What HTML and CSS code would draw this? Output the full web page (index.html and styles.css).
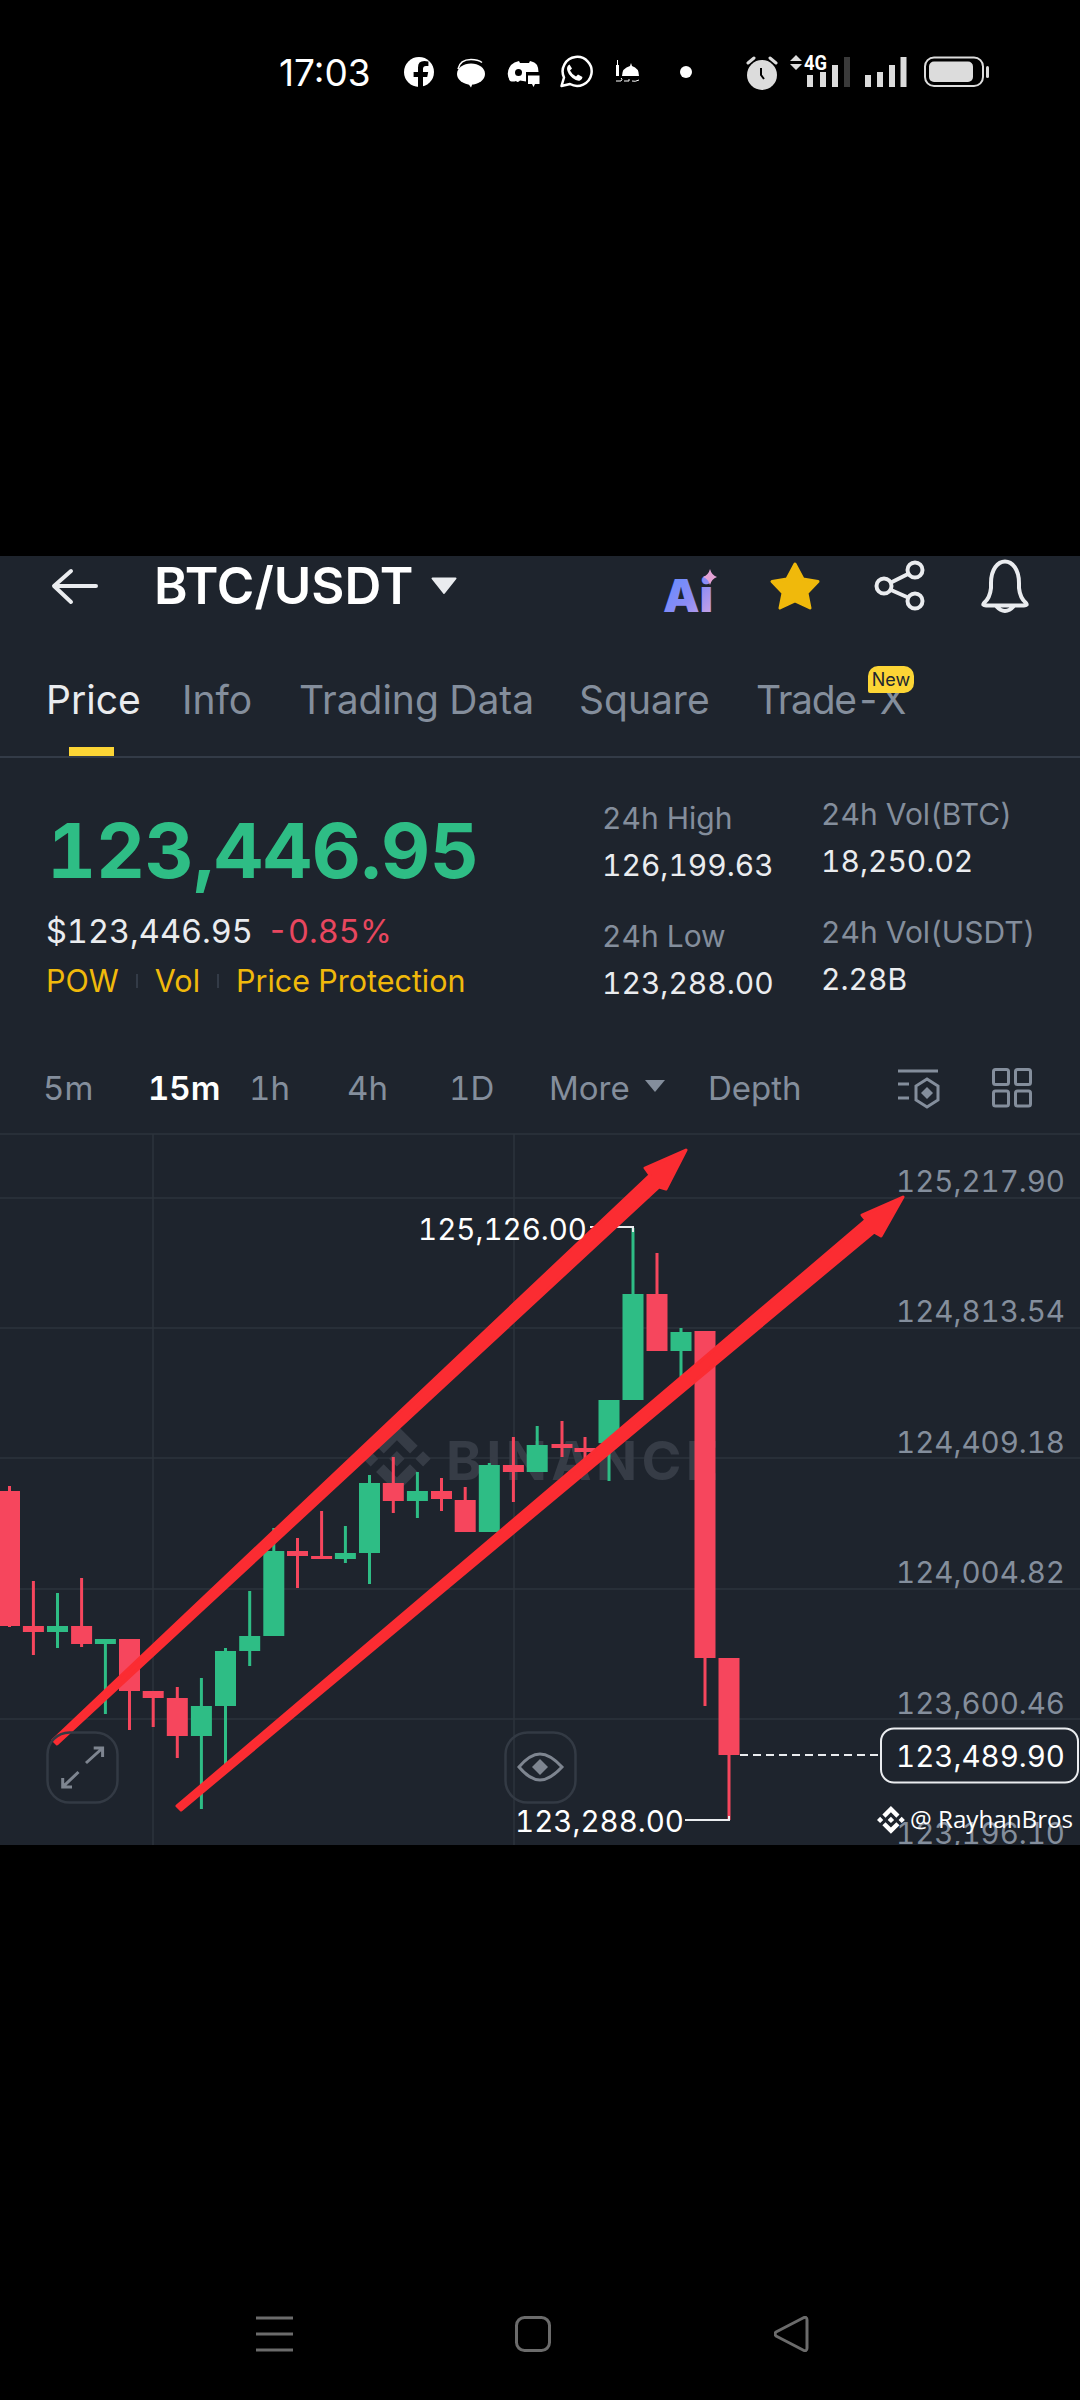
FILE: index.html
```html
<!DOCTYPE html>
<html lang="en">
<head>
<meta charset="utf-8">
<title>BTC/USDT</title>
<link rel="stylesheet" href="styles.css">
</head>
<body>
<div class="phone">
  <div class="status">
    <div class="time">17:03</div>
    <svg class="si" width="50" height="36" viewBox="400 55 50 36"><circle class="w" cx="419" cy="72" r="15"/><path class="k" d="M423 87.5V77h4.2l1-5H423v-3q0-3 3-3h2.4v-4.6q-2-.4-4-.4q-6.4 0-6.4 6.4V72h-4.4v5H418v10.5z"/></svg>
    <svg class="si" width="55" height="36" viewBox="450 55 55 36"><path class="ol" d="M458 69Q460 59.500 471 59.500Q478 59.500 482 62.500"/><ellipse class="w" cx="471" cy="74" rx="14" ry="10.500"/><path class="w" d="M467 82l4 5.500l2-5z"/></svg>
    <svg class="si" width="45" height="36" viewBox="505 55 45 36"><path class="w" d="M510 81Q505 73 511 65Q514 62 519 61L520 63H529L530 61Q535 62 537 65Q538.500 68 538.500 72H526V81.500L520 80.500Q518 83 516 81Q513 82 510 81Z"/><circle class="k" cx="518.500" cy="72.500" r="3.500"/><path class="w" d="M528 75.500H539.500V84H535L533.500 87L532 84H528Z"/></svg>
    <svg class="si" width="60" height="36" viewBox="550 55 60 36"><path class="wa" d="M561.500 86l2.500-8.500A14.500 14.500 0 1 1 570 84z"/><path class="w" d="M569.500 64.500q-2.500 1-2.500 4.500q.5 4.500 5.500 9q4.500 3.500 7.500 2.500q2.500-1 2.500-3.500l-4.500-2.500l-2 2q-4-2-6-6l2-2z"/></svg>
    <svg class="si" width="60" height="36" viewBox="610 55 60 36"><path class="w" d="M616 65h3v11h-3zM617 60h1v5h-1zM622 76q0-8 8-10l1-3l1 3q7 2 7 10z"/><path class="ol2" d="M616 81h5q2-2 0-3M624 81h5v-2M632 81q3 1 7-1"/></svg>
    <svg class="si" width="70" height="36" viewBox="670 55 70 36"><circle class="w" cx="686" cy="72" r="6"/></svg>
    <svg class="si" width="45" height="36" viewBox="740 55 45 36"><circle class="g" cx="762" cy="75" r="15"/><path class="ear" d="M748 63l6-5M776 63l-6-5"/><path class="hand" d="M761 68v7l3 4"/></svg>
    <svg class="si" width="75" height="36" viewBox="785 55 75 36"><path class="g" d="M796 55l6 6h-12zM796 70l6-6h-12z"/><text class="fourg" x="804" y="70" textLength="23" lengthAdjust="spacingAndGlyphs">4G</text><rect class="g" x="807" y="75" width="6" height="12"/><rect class="g" x="820" y="72" width="6" height="15"/><rect class="g" x="832" y="65" width="6" height="22"/><rect class="dim" x="844" y="57" width="6" height="30"/></svg>
    <svg class="si" width="60" height="36" viewBox="860 55 60 36"><rect class="g" x="865" y="75" width="6" height="12"/><rect class="g" x="877" y="72" width="6" height="15"/><rect class="g" x="889" y="65" width="6" height="22"/><rect class="g" x="900.500" y="57" width="6" height="30"/></svg>
    <svg class="si" width="70" height="36" viewBox="920 55 70 36"><rect class="bat" x="925" y="57.500" width="58" height="28.500" rx="9"/><rect class="g" x="929" y="61.500" width="44" height="20.500" rx="5"/><rect class="g" x="986" y="66" width="3" height="12" rx="1.500"/></svg>
  </div>

  <main class="app">
    <header class="head">
      <svg class="back" width="48" height="40" viewBox="50 567 48 40"><path class="hline" d="M96 587H55M71 572L54 587L71 603"/></svg>
      <h1 class="title">BTC/USDT</h1>
      <svg class="caret" width="28" height="18" viewBox="429 580 28 18"><path class="caretfill" d="M431.500 581.500H454.500L443 596z"/></svg>
      <svg class="headicons" width="370" height="56" viewBox="660 560 370 56">
        <defs><linearGradient id="aigrad" x1="0" y1="0" x2="1" y2="1"><stop offset="0" stop-color="#5a8cff"/><stop offset=".55" stop-color="#8b8cf5"/><stop offset="1" stop-color="#d9a8e0"/></linearGradient></defs>
        <text class="ai" x="663" y="614" fill="url(#aigrad)">Ai</text>
        <path class="spark" d="M710 571q1.500 6 7 8q-5.500 2-7 8q-1.500-6-7-8q5.500-2 7-8z"/>
        <path class="star" d="M795 566L803 581L818 583.500L807 595L810 610L795 603L780 610L783 595L772 583.500L787 581z"/>
        <g class="ico"><circle cx="915" cy="572" r="7.500"/><circle cx="884" cy="588" r="7.500"/><circle cx="915" cy="603" r="7.500"/><path d="M908 576L891 584.500M891 592L908 599.500"/>
        <path d="M984 605Q990 600 991 590V585C991 571 998 563.500 1005 563.500C1012 563.500 1019 571 1019 585V590Q1020 600 1026 605Q1028 607.500 1024 607.500H986Q982 607.500 984 605ZM996 608Q1005 618 1014 608"/></g>
      </svg>
    </header>

    <nav class="tabs">
      <div class="tab on">Price<span class="bar"></span></div>
      <div class="tab">Info</div>
      <div class="tab">Trading Data</div>
      <div class="tab">Square</div>
      <div class="tab tx">Trade-X<span class="new">New</span></div>
    </nav>

    <section class="ticker">
      <div class="tleft">
        <div class="last">123,446.95</div>
        <div class="fiat"><span>$123,446.95</span><span class="chg">-0.85%</span></div>
        <div class="tags"><span>POW</span><i class="sep"></i><span>Vol</span><i class="sep"></i><span>Price Protection</span></div>
      </div>
      <div class="col col1">
        <div class="lbl">24h High</div><div class="val">126,199.63</div>
        <div class="lbl l2">24h Low</div><div class="val">123,288.00</div>
      </div>
      <div class="col col2">
        <div class="lbl">24h Vol(BTC)</div><div class="val">18,250.02</div>
        <div class="lbl l2">24h Vol(USDT)</div><div class="val">2.28B</div>
      </div>
    </section>

    <div class="intervals">
      <span>5m</span><span class="act">15m</span><span>1h</span><span>4h</span><span>1D</span>
      <span class="more">More<svg class="mcaret" width="22" height="14" viewBox="0 0 22 14"><path d="M1 1H21L11 13z"/></svg></span>
      <span>Depth</span>
      <svg class="tool" width="44" height="42" viewBox="896 1067 44 42"><path class="tl" d="M897 1071H937M897 1084H908M897 1098H908M926 1079L937 1086V1100L926 1107L915 1100V1086Z"/><path class="tf" d="M926 1087L932 1093L926 1099L920 1093Z"/></svg>
      <svg class="tool" width="42" height="42" viewBox="990 1067 42 42"><g class="tl"><rect x="992.500" y="1069.500" width="15" height="15" rx="2"/><rect x="1014.500" y="1069.500" width="15" height="15" rx="2"/><rect x="992.500" y="1091" width="15" height="15" rx="2"/><rect x="1014.500" y="1091" width="15" height="15" rx="2"/></g></svg>
    </div>

    <div class="chart">
      <svg class="plot" width="1080" height="712" viewBox="0 1133 1080 712">
        <path class="grid" d="M0 1134H1080M0 1198H1080M0 1328H1080M0 1458H1080M0 1589H1080M0 1719H1080M153 1134V1845M514 1134V1845"/>
        <g class="mark">
          <path transform="translate(363 1425) scale(.535)" d="M38.730 53.200l24.590-24.580 24.600 24.600 14.300-14.310L63.320 0 24.420 38.900zM0 63.310l14.300-14.310 14.310 14.310-14.310 14.300zM38.730 73.410l24.590 24.590 24.600-24.600 14.310 14.290-38.900 38.910-38.910-38.880-.01-.01zM98 63.310l14.300-14.310 14.310 14.300-14.310 14.320zM77.830 63.300L63.320 48.780 52.590 59.510l-1.240 1.230-2.540 2.540 14.510 14.500 14.510-14.470z"/>
          <text class="marktext" x="446" y="1480">BINANCE</text>
        </g>
        <path class="wick up" d="M57.500 1593V1648M105.400 1639V1714M201.400 1678V1809M225.500 1648V1770M249.700 1591V1666M273.800 1528V1636M345.400 1526V1563M369.500 1475V1584M417.400 1472V1518M489.300 1463V1532M537.200 1426V1472M609 1400V1481M633 1228V1400M681 1328V1377"/>
        <path class="wick dn" d="M9.500 1486V1627M33.400 1581V1655M81.600 1578V1647M129.500 1639V1730M153.200 1691V1727M177.300 1687V1758M297.500 1538V1588M321.600 1511V1559M393.300 1457V1513M441.500 1478V1511M465.200 1487V1532M513.400 1437V1502M562 1421V1457M585 1437V1465M657 1253V1351M705 1331V1706M729 1658V1820"/>
        <path class="body up" d="M57.500 1626V1632M105.400 1639V1644M201.400 1706V1736M225.500 1651V1706M249.700 1636V1651M273.800 1551V1636M345.400 1553V1559M369.500 1483V1553M417.400 1491V1501M489.300 1465V1532M537.200 1445V1472M609 1400V1443M633 1294V1400M681 1332V1351"/>
        <path class="body dn" d="M9.500 1491V1626M33.400 1626V1632M81.600 1626V1644M129.500 1639V1691M153.200 1691V1698M177.300 1698V1736M297.500 1551V1556M321.600 1556V1559M393.300 1483V1501M441.500 1491V1499M465.200 1500V1532M513.400 1465V1472M562 1444V1448M585 1448V1452M657 1294V1351M705 1331V1658M729 1658V1755"/>
        <path class="lead" d="M590 1227H633V1232M685 1820H729V1816"/>
        <path class="dash" d="M740 1755H878"/>
        <path class="arrow" d="M53 1740L57 1744L659 1187L666 1189L686 1150L645 1168L650 1175Z"/>
        <path class="arrow" d="M177 1806L181 1810L874 1232L881 1236L903 1197L862 1215L866 1220Z"/>
        <text class="axis" x="1065" y="1192">125,217.90</text>
        <text class="axis" x="1065" y="1322">124,813.54</text>
        <text class="axis" x="1065" y="1453">124,409.18</text>
        <text class="axis" x="1065" y="1583">124,004.82</text>
        <text class="axis" x="1065" y="1714">123,600.46</text>
        <text class="axis" x="1065" y="1844">123,196.10</text>
        <rect class="tagbox" x="881" y="1728.500" width="197" height="54" rx="13"/>
        <text class="axis cur" x="1065" y="1767">123,489.90</text>
        <text class="hi" x="587" y="1240">125,126.00</text>
        <text class="hi" x="684" y="1832">123,288.00</text>
        <rect class="btn" x="47.500" y="1732.500" width="70" height="70" rx="22"/>
        <rect class="btn" x="505.500" y="1732.500" width="70" height="70" rx="22"/>
        <path class="exp" d="M86 1763L102.600 1748M93.700 1748H102.600V1757M78.500 1772L62.700 1787M62.700 1778V1787H72"/>
        <path class="exp" d="M519 1767Q530 1754 540 1754Q550 1754 562 1767Q550 1780 540 1780Q530 1780 519 1767Z"/>
        <path class="eyec" d="M540 1759L548 1767L540 1775L532 1767Z"/>
        <path transform="translate(877 1806) scale(.22)" class="rb" d="M38.730 53.200l24.590-24.580 24.600 24.600 14.300-14.310L63.320 0 24.420 38.900zM0 63.310l14.300-14.310 14.310 14.310-14.310 14.300zM38.730 73.410l24.590 24.590 24.600-24.600 14.310 14.290-38.900 38.910-38.910-38.880-.01-.01zM98 63.310l14.300-14.310 14.310 14.300-14.310 14.320zM77.830 63.300L63.320 48.780 52.590 59.510l-1.240 1.230-2.540 2.540 14.510 14.500 14.510-14.470z"/>
        <text class="rbt" x="910" y="1828">@ RayhanBros</text>
      </svg>
    </div>
  </main>

  <footer class="nav">
    <svg class="nv" width="37" height="36" viewBox="0 0 37 36"><path d="M0 2H37M0 18H37M0 34H37"/></svg>
    <svg class="nv" width="37" height="36" viewBox="0 0 37 36"><rect x="1.500" y="1.500" width="33" height="33" rx="8"/></svg>
    <svg class="nv" width="37" height="36" viewBox="0 0 37 36"><path d="M2 16Q0 18 2 20L29 34Q33 36 33 32V4Q33 0 29 2Z"/></svg>
  </footer>
</div>
</body>
</html>
```

FILE: styles.css
```css
* { box-sizing: border-box; }
html, body { margin: 0; padding: 0; background: #000; }
body { font-family: Inter, "Liberation Sans", sans-serif; color: #eaecef; font-variant-numeric: tabular-nums; }
.phone { width: 1080px; height: 2400px; display: flex; flex-direction: column; overflow: hidden; }

.status { height: 556px; padding: 55px 0 0 279px; display: flex; align-items: flex-start; }
.time { width: 121px; font-size: 37px; line-height: 36px; color: #fff; font-variant-numeric: normal; }
.si { display: block; flex: none; }
.w { fill: #fff; }
.k { fill: #000; }
.g { fill: #dcdcdc; }
.dim { fill: #3a3a3a; }
.ol { fill: none; stroke: #fff; stroke-width: 1.500; }
.ol2 { fill: none; stroke: #fff; stroke-width: 1; }
.wa { fill: none; stroke: #fff; stroke-width: 2.500; stroke-linejoin: round; }
.ear { fill: none; stroke: #dcdcdc; stroke-width: 3; stroke-linecap: round; }
.hand { fill: none; stroke: #000; stroke-width: 2; }
.fourg { font-family: Roboto, sans-serif; font-weight: 700; font-size: 21px; fill: #fff; }
.bat { fill: none; stroke: #dcdcdc; stroke-width: 2; }

.app { height: 1289px; background: #1e242d; display: flex; flex-direction: column; }

.head { height: 60px; padding: 0 50px 0 50px; display: flex; align-items: center; flex: none; }
.back { display: block; flex: none; }
.hline { fill: none; stroke: #eaecef; stroke-width: 4; stroke-linecap: round; stroke-linejoin: round; }
.title { margin: 0 0 0 56px; font-size: 51px; line-height: 60px; font-weight: 600; color: #fff; }
.caret { margin-left: 17px; display: block; flex: none; }
.caretfill { fill: #eaecef; stroke: #eaecef; stroke-width: 2; stroke-linejoin: round; }
.headicons { margin-left: auto; display: block; flex: none; }
.ai { font-size: 46px; font-weight: 900; font-family: Inter, sans-serif; }
.spark { fill: #e4a3d6; }
.star { fill: #f0b90b; stroke: #f0b90b; stroke-width: 3; stroke-linejoin: round; }
.ico { fill: none; stroke: #eaecef; stroke-width: 4; stroke-linejoin: round; stroke-linecap: round; }

.tabs { height: 142px; padding-left: 46px; display: grid; grid-template-columns: 136px 117px 280px 177px auto; border-bottom: 2px solid #333b47; flex: none; }
.tab { position: relative; height: 140px; padding-top: 62px; font-size: 39px; line-height: 44px; color: #848e9c; white-space: nowrap; }
.tab.on { color: #eaecef; }
.tab.tx { letter-spacing: -1.300px; }
.bar { position: absolute; left: 23px; bottom: 0; width: 45px; height: 9px; background: #fcd535; }
.new { position: absolute; left: 112px; top: 50px; width: 46px; height: 27px; border-radius: 10px 10px 10px 2px; background: #fcd535; color: #202630; font-size: 18px; line-height: 27px; text-align: center; letter-spacing: 0; }

.ticker { height: 308px; display: flex; flex: none; }
.tleft { width: 602px; padding: 47px 0 0 46px; flex: none; }
.last { margin-left: 1px; font-size: 76px; line-height: 90px; font-weight: 700; letter-spacing: -.200px; color: #2ebd85; white-space: nowrap; }
.fiat { margin-top: 17px; font-size: 32.500px; line-height: 40px; display: flex; gap: 14px; color: #eaecef; }
.chg { color: #e8475f; }
.tags { margin-top: 9px; font-size: 30.500px; line-height: 40px; display: flex; align-items: center; gap: 17px; color: #f0b90b; }
.sep { width: 2px; height: 14px; background: #333b47; }

.col { flex: none; }
.col1 { width: 219px; padding-top: 42px; }
.col2 { padding-top: 38px; }
.lbl { font-size: 30px; line-height: 36px; color: #848e9c; white-space: nowrap; }
.val { margin-top: 11px; font-size: 30px; line-height: 36px; color: #eaecef; white-space: nowrap; }
.l2 { margin-top: 35px; }

.intervals { height: 67px; padding-left: 43px; display: grid; grid-template-columns: 105px 101px 98px 102px 100px 159px 189px 94px 42px; align-items: start; flex: none; font-size: 33px; line-height: 44px; color: #848e9c; }
.act { color: #fff; font-weight: 600; }
.more { display: flex; align-items: center; gap: 14px; }
.mcaret { display: block; margin-top: -4px; fill: #848e9c; }
.tool { display: block; margin-top: 1px; }
.tl { fill: none; stroke: #848e9c; stroke-width: 3; }
.tf { fill: #848e9c; }

.chart { height: 712px; flex: none; overflow: hidden; }
.plot { display: block; }
.grid { fill: none; stroke: #2d333c; stroke-width: 1.500; }
.mark { fill: #363c46; }
.marktext { font-size: 54px; font-weight: 700; letter-spacing: 4.400px; }
.wick { fill: none; stroke-width: 3; }
.body { fill: none; stroke-width: 21; }
.up { stroke: #2ebd85; }
.dn { stroke: #f6465d; }
.lead { fill: none; stroke: #eaecef; stroke-width: 2; }
.dash { fill: none; stroke: #eaecef; stroke-width: 2; stroke-dasharray: 8 5; }
.arrow { fill: #fb2c32; stroke: #fb2c32; stroke-width: 3; stroke-linejoin: round; }
.axis { font-size: 29.500px; fill: #848e9c; text-anchor: end; }
.cur { fill: #fff; }
.tagbox { fill: #1e242d; stroke: #eaecef; stroke-width: 2; }
.hi { font-size: 29.500px; fill: #fff; text-anchor: end; }
.btn { fill: none; stroke: #333a44; stroke-width: 2.500; }
.exp { fill: none; stroke: #7e8590; stroke-width: 3; }
.eyec { fill: #7e8590; }
.rb { fill: #fff; }
.rbt { font-family: "Open Sans", sans-serif; font-size: 24.200px; fill: #fff; }

.nav { flex: 1; padding: 471px 0 0 256px; display: flex; gap: 222px; align-items: flex-start; }
.nv { display: block; fill: none; stroke: #6b6b6b; stroke-width: 3; stroke-linejoin: round; }
```
